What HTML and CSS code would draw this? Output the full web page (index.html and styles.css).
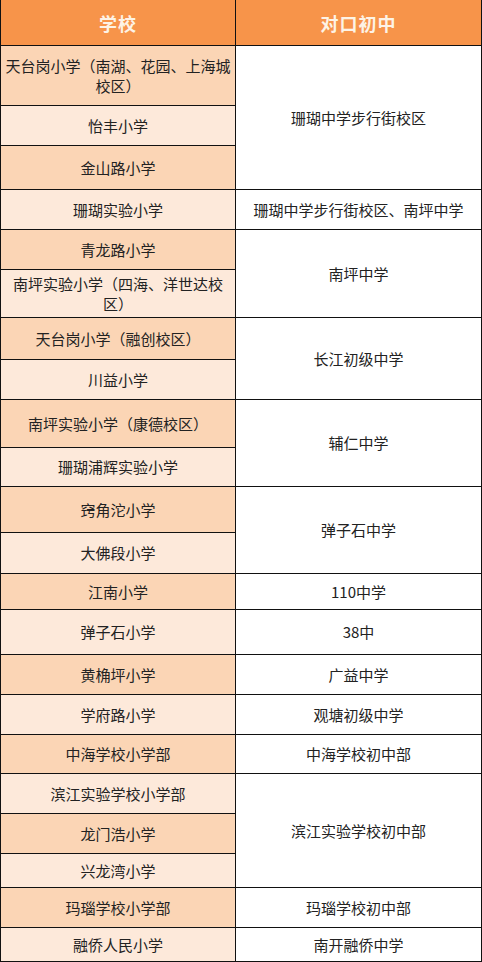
FILE: index.html
```html
<!DOCTYPE html>
<html lang="zh">
<head>
<meta charset="utf-8">
<title>学校 对口初中</title>
<link rel="stylesheet" href="styles.css">
</head>
<body>
<div class="table">
  <div class="cell head">学校</div>
  <div class="cell head">对口初中</div>

  <div class="cell l dark">天台岗小学（南湖、花园、上海城校区）</div>
  <div class="cell r span3">珊瑚中学步行街校区</div>
  <div class="cell l light">怡丰小学</div>
  <div class="cell l dark">金山路小学</div>

  <div class="cell l light">珊瑚实验小学</div>
  <div class="cell r">珊瑚中学步行街校区、南坪中学</div>

  <div class="cell l dark">青龙路小学</div>
  <div class="cell r span2">南坪中学</div>
  <div class="cell l light">南坪实验小学（四海、洋世达校区）</div>

  <div class="cell l dark">天台岗小学（融创校区）</div>
  <div class="cell r span2">长江初级中学</div>
  <div class="cell l light">川益小学</div>

  <div class="cell l dark">南坪实验小学（康德校区）</div>
  <div class="cell r span2">辅仁中学</div>
  <div class="cell l light">珊瑚浦辉实验小学</div>

  <div class="cell l dark">窍角沱小学</div>
  <div class="cell r span2">弹子石中学</div>
  <div class="cell l light">大佛段小学</div>

  <div class="cell l dark">江南小学</div>
  <div class="cell r">110中学</div>

  <div class="cell l light">弹子石小学</div>
  <div class="cell r">38中</div>

  <div class="cell l dark">黄桷坪小学</div>
  <div class="cell r">广益中学</div>

  <div class="cell l light">学府路小学</div>
  <div class="cell r">观塘初级中学</div>

  <div class="cell l dark">中海学校小学部</div>
  <div class="cell r">中海学校初中部</div>

  <div class="cell l light">滨江实验学校小学部</div>
  <div class="cell r span3">滨江实验学校初中部</div>
  <div class="cell l dark">龙门浩小学</div>
  <div class="cell l light">兴龙湾小学</div>

  <div class="cell l dark">玛瑙学校小学部</div>
  <div class="cell r">玛瑙学校初中部</div>

  <div class="cell l light">融侨人民小学</div>
  <div class="cell r">南开融侨中学</div>
</div>
</body>
</html>
```
FILE: styles.css
```css
html, body {
  margin: 0;
  padding: 0;
  background: #ffffff;
}

.table {
  width: 482px;
  height: 962px;
  box-sizing: border-box;
  border-left: 1px solid #111;
  display: grid;
  grid-template-columns: 235px 246px;
  grid-template-rows: 46px 60px 40px 44px 40px 40px 48px 42px 40px 48px 39px 46px 41px 36px 45px 40px 40px 39px 40px 40px 34px 40px 34px;
  font-family: "Noto Sans CJK SC", "Noto Sans", sans-serif;
  font-size: 15px;
  line-height: 20px;
  color: #222222;
}

.cell {
  box-sizing: border-box;
  border-right: 1px solid #111;
  border-bottom: 1px solid #111;
  display: flex;
  align-items: center;
  justify-content: center;
  text-align: center;
  padding: 0 2px;
}

.head {
  background: #f7944a;
  color: #fdf3e6;
  font-weight: 700;
  font-size: 18px;
  letter-spacing: 1px;
}

.dark {
  background: #fbd5b5;
}

.light {
  background: #fde9da;
}

.r {
  background: #ffffff;
}

.span2 {
  grid-row: span 2;
}

.span3 {
  grid-row: span 3;
}
```
